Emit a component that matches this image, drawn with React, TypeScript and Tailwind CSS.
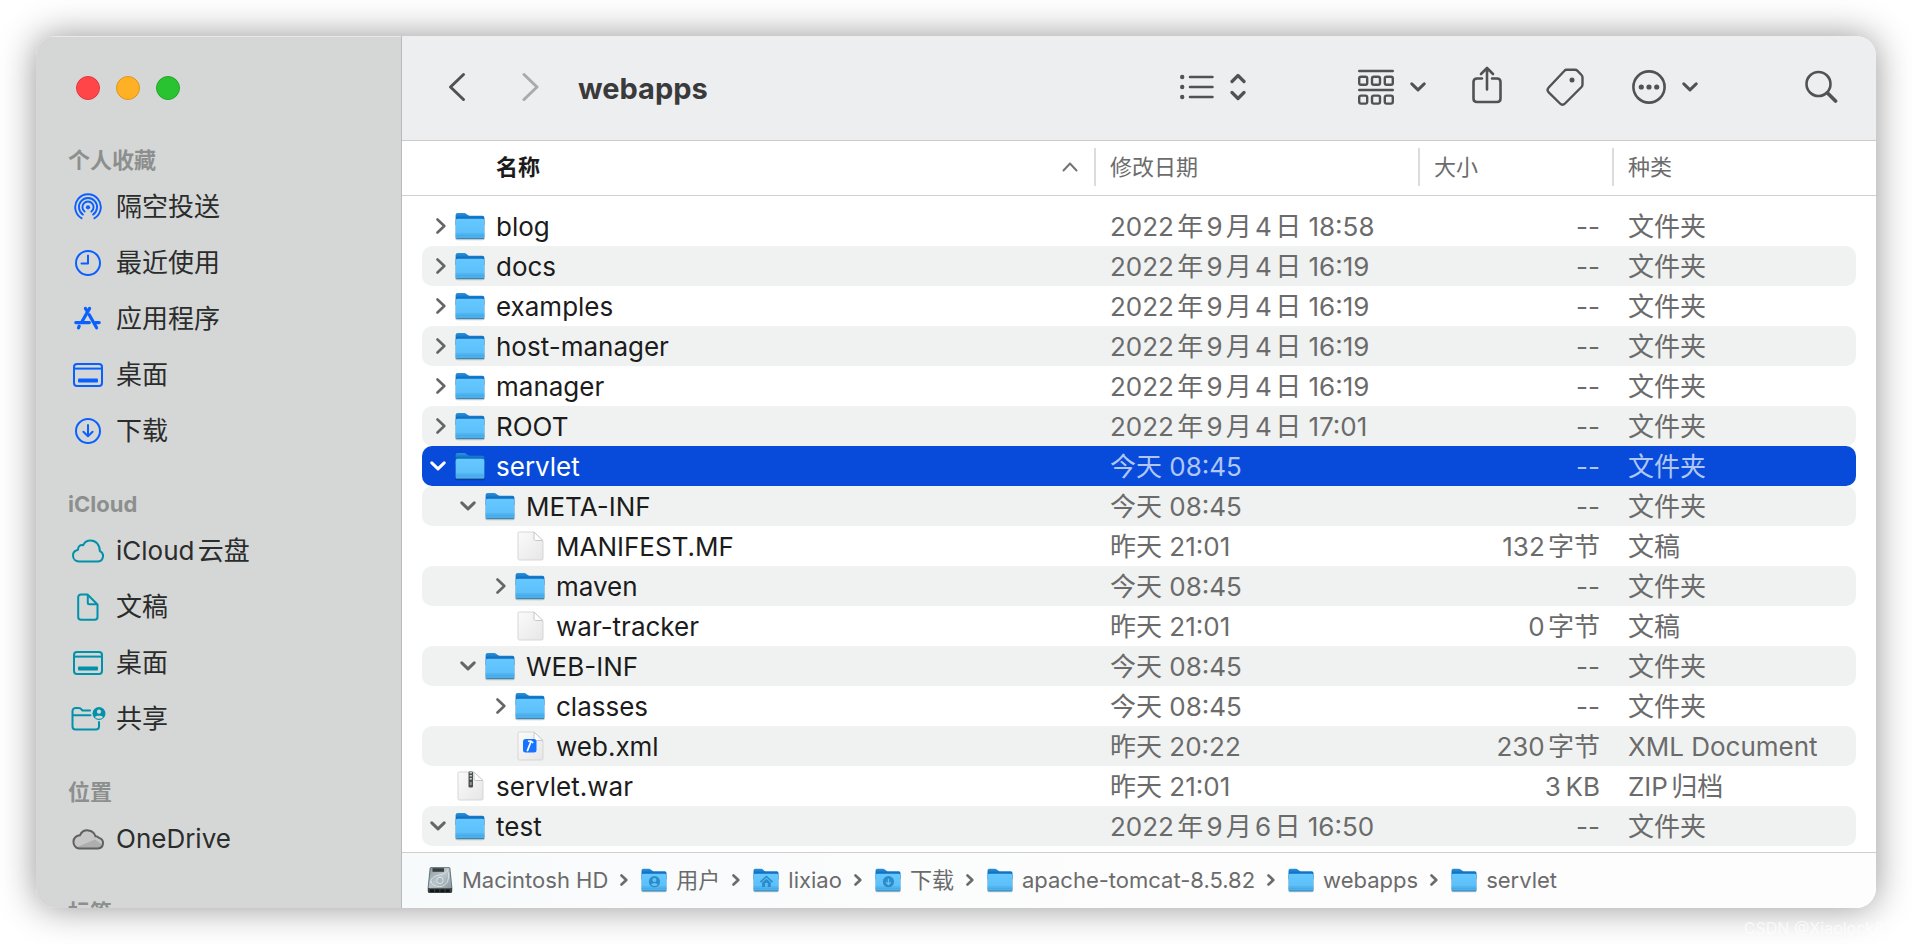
import type { ReactNode } from "react";

type IconProps = { className?: string };

type Entry = {
  name: string;
  depth: number;
  icon: "folder" | "doc" | "xml" | "zip";
  open?: boolean;
  date: string;
  size: string;
  kind: string;
  selected?: boolean;
};

const entries: Entry[] = [
  { name: "blog", depth: 0, icon: "folder", date: "2022年9月4日 18:58", size: "--", kind: "文件夹" },
  { name: "docs", depth: 0, icon: "folder", date: "2022年9月4日 16:19", size: "--", kind: "文件夹" },
  { name: "examples", depth: 0, icon: "folder", date: "2022年9月4日 16:19", size: "--", kind: "文件夹" },
  { name: "host-manager", depth: 0, icon: "folder", date: "2022年9月4日 16:19", size: "--", kind: "文件夹" },
  { name: "manager", depth: 0, icon: "folder", date: "2022年9月4日 16:19", size: "--", kind: "文件夹" },
  { name: "ROOT", depth: 0, icon: "folder", date: "2022年9月4日 17:01", size: "--", kind: "文件夹" },
  { name: "servlet", depth: 0, icon: "folder", open: true, selected: true, date: "今天 08:45", size: "--", kind: "文件夹" },
  { name: "META-INF", depth: 1, icon: "folder", open: true, date: "今天 08:45", size: "--", kind: "文件夹" },
  { name: "MANIFEST.MF", depth: 2, icon: "doc", date: "昨天 21:01", size: "132字节", kind: "文稿" },
  { name: "maven", depth: 2, icon: "folder", date: "今天 08:45", size: "--", kind: "文件夹" },
  { name: "war-tracker", depth: 2, icon: "doc", date: "昨天 21:01", size: "0字节", kind: "文稿" },
  { name: "WEB-INF", depth: 1, icon: "folder", open: true, date: "今天 08:45", size: "--", kind: "文件夹" },
  { name: "classes", depth: 2, icon: "folder", date: "今天 08:45", size: "--", kind: "文件夹" },
  { name: "web.xml", depth: 2, icon: "xml", date: "昨天 20:22", size: "230字节", kind: "XML Document" },
  { name: "servlet.war", depth: 0, icon: "zip", date: "昨天 21:01", size: "3\u2009KB", kind: "ZIP归档" },
  { name: "test", depth: 0, icon: "folder", open: true, date: "2022年9月6日 16:50", size: "--", kind: "文件夹" },
];

const indents = ["pl-2", "pl-[38px]", "pl-[68px]"];

/* ---------- sidebar icons ---------- */

function AirDropIcon() {
  return (
    <svg width="28" height="28" viewBox="0 0 28 28" fill="none" stroke="currentColor" strokeWidth="1.9" strokeLinecap="round">
      <path d="M7.6 25.2A12.8 12.8 0 1 1 20.4 25.2" />
      <path d="M8.9 21.6A9.1 9.1 0 1 1 19.1 21.6" />
      <path d="M10.6 18.6A5.6 5.6 0 1 1 17.4 18.6" />
      <circle cx="14" cy="14.3" r="2.1" fill="currentColor" stroke="none" />
    </svg>
  );
}

function ClockIcon() {
  return (
    <svg width="28" height="28" viewBox="0 0 28 28" fill="none" stroke="currentColor" strokeWidth="2" strokeLinecap="round" strokeLinejoin="round">
      <circle cx="14" cy="14" r="12" />
      <path d="M14 6.5V14.5H7.5" />
    </svg>
  );
}

function AppsIcon() {
  return (
    <svg width="28" height="28" viewBox="0 0 28 28" fill="none" stroke="currentColor" strokeWidth="3.2" strokeLinecap="round">
      <path d="M1.8 17.6H15.4M21.6 17.6H25.2" />
      <path d="M15.6 3.4L7.6 17.2" />
      <path d="M11.4 3.4L13.4 6.6" />
      <path d="M5.2 21.2L4.5 22.8" />
      <path d="M15.2 9.8L22.6 22.8" />
    </svg>
  );
}

function DesktopIcon() {
  return (
    <svg width="30" height="24" viewBox="0 0 30 24" fill="none" stroke="currentColor" strokeWidth="2">
      <rect x="1" y="1" width="28" height="22" rx="3" />
      <path d="M1 5.6H29" />
      <rect x="5" y="15.5" width="20" height="4" rx="1" fill="currentColor" stroke="none" />
    </svg>
  );
}

function DownloadIcon() {
  return (
    <svg width="28" height="28" viewBox="0 0 28 28" fill="none" stroke="currentColor" strokeWidth="2" strokeLinecap="round" strokeLinejoin="round">
      <circle cx="14" cy="14" r="12" />
      <path d="M14 8V19M9.4 14.8L14 19.3L18.6 14.8" />
    </svg>
  );
}

function CloudIcon() {
  return (
    <svg width="32" height="24" viewBox="0 0 32 24" fill="none" stroke="currentColor" strokeWidth="2" strokeLinejoin="round">
      <path d="M7 22.500H25.500A5.500 5.500 0 0 0 27.800 12C27.800 5.600 23.800 1.500 18.600 1.500C15 1.500 12.400 3.400 11.200 6.200C8.600 5.300 6 7.300 6 10.800C3 11.500 1 13.700 1 16.600C1 20 3.600 22.500 7 22.500Z" />
    </svg>
  );
}

function DocumentIcon() {
  return (
    <svg width="24" height="28" viewBox="0 0 24 28" fill="none" stroke="currentColor" strokeWidth="2" strokeLinejoin="round">
      <path d="M5 1.5H11.5L21.5 11.5V24A2.8 2.8 0 0 1 18.7 26.8H5A2.8 2.8 0 0 1 2.2 24V4.3A2.8 2.8 0 0 1 5 1.5Z" />
      <path d="M11.8 2V9.7A1.5 1.5 0 0 0 13.3 11.2H21" />
    </svg>
  );
}

function SharedIcon() {
  return (
    <svg width="36" height="26" viewBox="0 0 36 26" fill="none" stroke="currentColor" strokeWidth="2" strokeLinecap="round">
      <path d="M20 4.5H12.5L10.5 2.6C9.8 2 9.500 2 8.5 2H5.5A3 3 0 0 0 2.5 5V20.5A3 3 0 0 0 5.5 23.5H26A3 3 0 0 0 29 20.5V16" />
      <path d="M3 9.2H20.5" />
      <circle cx="29" cy="7.5" r="6.5" fill="currentColor" stroke="none" />
      <circle cx="29" cy="5.7" r="2.1" fill="#d5d7d6" stroke="none" />
      <path d="M25 11.2C26 9.3 32 9.3 33 11.2C31 13.3 27 13.3 25 11.2Z" fill="#d5d7d6" stroke="none" />
    </svg>
  );
}

function OneDriveIcon() {
  return (
    <svg width="34" height="22" viewBox="0 0 34 22">
      <path d="M8 20.5H27A5.4 5.4 0 0 0 28 9.9A5 5 0 0 0 24.5 8.3A8.3 8.3 0 0 0 9 7.2A6.7 6.7 0 0 0 8 20.5Z" fill="#c6c7c6" />
      <path d="M5 19.6L24 11.5L31.5 17Q30 20.5 27 20.5H8Z" fill="#adafad" />
      <path d="M8 20.5H27A5.4 5.4 0 0 0 28 9.9A5 5 0 0 0 24.5 8.3A8.3 8.3 0 0 0 9 7.2A6.7 6.7 0 0 0 8 20.5Z" fill="none" stroke="#5e5f5e" strokeWidth="2" />
    </svg>
  );
}

/* ---------- file icons ---------- */

function FolderIcon({ className = "h-[30px] w-8", badge }: IconProps & { badge?: ReactNode }) {
  return (
    <svg className={className} viewBox="0 0 32 30">
      <defs>
        <linearGradient id="folder-front" x1="0" y1="0" x2="0" y2="1">
          <stop offset="0" stopColor="#66c8ff" />
          <stop offset="0.75" stopColor="#5cbffa" />
          <stop offset="1" stopColor="#46a9e6" />
        </linearGradient>
        <linearGradient id="folder-back" x1="0" y1="0" x2="0" y2="1">
          <stop offset="0" stopColor="#2b95da" />
          <stop offset="0.4" stopColor="#0f6fc4" />
        </linearGradient>
      </defs>
      <rect x="1.2" y="8" width="29.6" height="21.2" rx="2" fill="#000" opacity="0.22" />
      <path d="M1.6 4Q1.6 2 3.6 2H10.5C12.5 2 13.5 4.8 15.5 4.8H28.500Q30.400 4.8 30.4 6.8V14H1.6Z" fill="url(#folder-back)" />
      <path d="M1.6 10Q1.6 7.8 3.6 7.8H28.4Q30.4 7.8 30.4 10V26.3Q30.4 28 28.8 28H3.300Q1.6 28 1.6 26.3Z" fill="url(#folder-front)" />
      <path d="M1.600 23H30.400M1.600 24.7H30.400" stroke="#2f93d0" strokeWidth="0.6" opacity="0.7" />
      <path d="M2.5 27.5H30" stroke="#2c7fb4" strokeWidth="0.8" />
      {badge}
    </svg>
  );
}

function FileIcon({ children }: { children?: ReactNode }) {
  return (
    <svg className="h-[30px] w-8" viewBox="0 0 32 30">
      <defs>
        <linearGradient id="sheet" x1="0" y1="0" x2="1" y2="1">
          <stop offset="0" stopColor="#fbfbfb" />
          <stop offset="1" stopColor="#e6e6e6" />
        </linearGradient>
      </defs>
      <path d="M4 2Q4 1 5.5 1H20L29 10V27.5Q29 29 27.5 29H5.5Q4 29 4 27.5Z" fill="url(#sheet)" stroke="#d2d2d2" strokeWidth="0.9" />
      <path d="M20 1V8Q20 9.5 21.5 9.5H29Z" fill="#fdfdfd" stroke="#c2c2c2" strokeWidth="0.9" />
      {children}
    </svg>
  );
}

function XmlFileIcon() {
  return (
    <FileIcon>
      <rect x="9" y="8" width="13.5" height="13.5" rx="2.5" fill="#1673ff" />
      <path d="M17 10.5L13.5 19.5" stroke="#fff" strokeWidth="1.8" strokeLinecap="round" />
      <path d="M14 10.3Q17 9.3 19.2 12" stroke="#fff" strokeWidth="1.4" fill="none" />
    </FileIcon>
  );
}

function ZipFileIcon() {
  return (
    <FileIcon>
      <rect x="14.5" y="0.5" width="4.5" height="16" rx="1" fill="#4c4f50" />
      <path d="M16.8 1V10" stroke="#c9cfd0" strokeWidth="2.2" strokeDasharray="1.5 1.5" />
      <path d="M16.8 11V14" stroke="#8f9899" strokeWidth="1.8" />
    </FileIcon>
  );
}

function DiskIcon() {
  return (
    <svg className="size-7" viewBox="0 0 28 28">
      <defs>
        <linearGradient id="disk" x1="0" y1="0" x2="1" y2="1">
          <stop offset="0" stopColor="#8b999f" />
          <stop offset="0.5" stopColor="#b9c6cb" />
          <stop offset="1" stopColor="#8a979c" />
        </linearGradient>
      </defs>
      <path d="M3.600 2.5Q3.800 1 5.300 1H22.700Q24.200 1 24.400 2.5L26.3 21V25Q26.3 27 24.5 27H3.5Q1.7 27 1.7 25V21Z" fill="#66727a" />
      <path d="M2 22H26V25.300Q26 27 24.500 27H3.500Q2 27 2 25.300Z" fill="#3b3f41" />
      <path d="M4.600 3Q4.700 1.700 5.600 1.700H22.400Q23.300 1.700 23.400 3L25.400 21Q25.400 22.3 24.2 22.3H3.800Q2.600 22.3 2.600 21Z" fill="url(#disk)" />
      <rect x="6.5" y="2.2" width="11.5" height="3.6" fill="#393e41" />
      <path d="M4.5 17C5 10 12 9.5 15 8.5C19 7.5 21.5 6 21.7 3.5M22.5 6.5C23.5 15 20 20.5 13.5 20.5C9 20.5 5.5 19 5 15" stroke="#dce6ea" strokeWidth="0.9" fill="none" />
      <circle cx="14" cy="14.5" r="3.2" fill="#a9b6bb" stroke="#e0e9ec" strokeWidth="0.9" />
      <path d="M4 24.7H24" stroke="#121415" strokeWidth="2.4" strokeDasharray="4 1.2" />
    </svg>
  );
}

const fileIcons = {
  folder: <FolderIcon />,
  doc: <FileIcon />,
  xml: <XmlFileIcon />,
  zip: <ZipFileIcon />,
};

/* ---------- chevrons ---------- */

function ChevronDown({ className = "" }: IconProps) {
  return (
    <svg className={className} width="16" height="10" viewBox="0 0 16 10" fill="none" stroke="currentColor" strokeWidth="3" strokeLinecap="round" strokeLinejoin="round">
      <path d="M1.8 1.8L8 7.8L14.2 1.8" />
    </svg>
  );
}

function ChevronRight() {
  return (
    <svg width="10" height="16" viewBox="0 0 10 16" fill="none" stroke="currentColor" strokeWidth="2.6" strokeLinecap="round" strokeLinejoin="round">
      <path d="M1.5 1.5L8.3 8L1.5 14.5" />
    </svg>
  );
}

/* ---------- sidebar ---------- */

const sections = [
  {
    title: "个人收藏",
    color: "text-[#0a60ff]",
    items: [
      { label: "隔空投送", icon: <AirDropIcon /> },
      { label: "最近使用", icon: <ClockIcon /> },
      { label: "应用程序", icon: <AppsIcon /> },
      { label: "桌面", icon: <DesktopIcon /> },
      { label: "下载", icon: <DownloadIcon /> },
    ],
  },
  {
    title: "iCloud",
    color: "text-[#0092ab]",
    items: [
      { label: "iCloud云盘", icon: <CloudIcon /> },
      { label: "文稿", icon: <DocumentIcon /> },
      { label: "桌面", icon: <DesktopIcon /> },
      { label: "共享", icon: <SharedIcon /> },
    ],
  },
  {
    title: "位置",
    color: "text-[#5e5f5e]",
    items: [{ label: "OneDrive", icon: <OneDriveIcon /> }],
  },
  { title: "标签", color: "", items: [] },
];

function Sidebar() {
  return (
    <aside className="flex w-[366px] shrink-0 flex-col overflow-hidden border-r border-[#b9bbba] bg-[#d5d7d6]">
      <div className="flex h-[105px] shrink-0 items-center gap-4 border-t border-[#e8e9e9] pb-[2px] pl-10">
        <button aria-label="关闭" className="size-6 rounded-full border border-[#e0383c] bg-[#ff4548]" />
        <button aria-label="最小化" className="size-6 rounded-full border border-[#dc951f] bg-[#ffb024]" />
        <button aria-label="缩放" className="size-6 rounded-full border border-[#1fa82a] bg-[#29c231]" />
      </div>
      <nav className="flex flex-col gap-[26px] px-8">
        {sections.map((section) => (
          <section key={section.title}>
            <h2 className="flex h-[38px] items-center text-[22px] font-bold text-[#8d8f8e]">{section.title}</h2>
            {section.items.map((item) => (
              <a key={item.label} href="#" className="flex h-14 items-center gap-2 text-[#2b2c2c]">
                <span className={`flex w-10 justify-center ${section.color}`}>{item.icon}</span>
                {item.label}
              </a>
            ))}
          </section>
        ))}
      </nav>
    </aside>
  );
}

/* ---------- toolbar ---------- */

function Toolbar() {
  return (
    <header className="flex h-[105px] shrink-0 items-center border-b border-[#cbcbcc] bg-[#edeef0] pr-[38px] pb-[2px] pl-[46px] text-[#515254]">
      <button aria-label="后退">
        <svg width="18" height="30" viewBox="0 0 18 30" fill="none" stroke="currentColor" strokeWidth="3" strokeLinecap="round" strokeLinejoin="round">
          <path d="M15.5 2.5L2.5 15L15.5 27.5" />
        </svg>
      </button>
      <button aria-label="前进" className="ml-14 text-[#a9aaac]">
        <svg width="18" height="30" viewBox="0 0 18 30" fill="none" stroke="currentColor" strokeWidth="3" strokeLinecap="round" strokeLinejoin="round">
          <path d="M2 2.5L15 15L2 27.5" />
        </svg>
      </button>
      <h1 className="ml-[38px] pt-[2px] text-[29px] font-bold text-[#3a3a3b]">webapps</h1>

      <button aria-label="列表显示" className="ml-auto flex items-center gap-4">
        <svg width="34" height="26" viewBox="0 0 34 26" stroke="currentColor" strokeWidth="2.5" strokeLinecap="round">
          <path d="M10 3H32.5M10 13H32.5M10 23H32.5" />
          <path d="M2.2 3H2.21M2.2 13H2.21M2.2 23H2.21" strokeWidth="4.4" />
        </svg>
        <svg width="16" height="28" viewBox="0 0 16 28" fill="none" stroke="currentColor" strokeWidth="3.2" strokeLinecap="round" strokeLinejoin="round">
          <path d="M2 8.5L8 2.5L14 8.5M2 19.5L8 25.5L14 19.5" />
        </svg>
      </button>
      <button aria-label="分组" className="ml-28 flex items-center gap-4">
        <svg width="36" height="36" viewBox="0 0 36 36" fill="none" stroke="currentColor" strokeWidth="2.4" strokeLinecap="round">
          <path d="M1.2 2H34.8M1.2 21H34.8" />
          <rect x="1.2" y="7.7" width="8" height="8" rx="1.8" />
          <rect x="14" y="7.7" width="8" height="8" rx="1.8" />
          <rect x="26.8" y="7.7" width="8" height="8" rx="1.8" />
          <rect x="1.2" y="26.6" width="8" height="8" rx="1.8" />
          <rect x="14" y="26.6" width="8" height="8" rx="1.8" />
          <rect x="26.8" y="26.6" width="8" height="8" rx="1.8" />
        </svg>
        <ChevronDown />
      </button>
      <button aria-label="共享" className="ml-[46px] pb-1">
        <svg width="30" height="38" viewBox="0 0 30 38" fill="none" stroke="currentColor" strokeWidth="2.6" strokeLinecap="round" strokeLinejoin="round">
          <path d="M10 12.5H5Q1.5 12.5 1.5 16V32.5Q1.5 36 5 36H25Q28.5 36 28.5 32.5V16Q28.5 12.5 25 12.5H20" />
          <path d="M15 23.5V2M9 8L15 2L21 8" />
        </svg>
      </button>
      <button aria-label="标签" className="ml-11">
        <svg width="38" height="38" viewBox="0 0 38 38" fill="none" stroke="currentColor" strokeWidth="2.4" strokeLinejoin="round">
          <path d="M20.5 1.8H29Q30.5 1.8 31.5 2.8L35.5 7Q36.5 8 36.5 9.5V16.5Q36.5 18 35.5 19L19 35.5Q16.5 38 14 35.5L2.7 24.3Q0.4 22 2.7 19.5L18.5 2.8Q19.3 1.8 20.5 1.8Z" />
          <circle cx="26" cy="12" r="2.5" fill="currentColor" stroke="none" />
        </svg>
      </button>
      <button aria-label="更多" className="ml-12 flex items-center gap-4">
        <svg width="34" height="34" viewBox="0 0 34 34">
          <circle cx="17" cy="17" r="15.6" fill="none" stroke="currentColor" strokeWidth="2.6" />
          <circle cx="9.3" cy="17" r="2.6" fill="currentColor" />
          <circle cx="17" cy="17" r="2.6" fill="currentColor" />
          <circle cx="24.7" cy="17" r="2.6" fill="currentColor" />
        </svg>
        <ChevronDown />
      </button>
      <button aria-label="搜索" className="ml-[106px]">
        <svg width="34" height="34" viewBox="0 0 34 34" fill="none" stroke="currentColor" strokeLinecap="round">
          <circle cx="14.500" cy="14" r="12" strokeWidth="2.6" />
          <path d="M23.500 23L31.500 31" strokeWidth="3.8" />
        </svg>
      </button>
    </header>
  );
}

/* ---------- file list ---------- */

const columns = ["修改日期", "大小", "种类"];

function FileList() {
  return (
    <div className="min-h-0 flex-1 overflow-hidden bg-white">
      <table className="w-full table-fixed border-separate border-spacing-0 text-left">
        <colgroup>
          <col />
          <col className="w-[324px]" />
          <col className="w-[194px]" />
          <col className="w-[264px]" />
        </colgroup>
        <thead>
          <tr className="h-[55px] text-[22px]">
            <th className="border-b border-[#d0d0d0] p-0 pb-[3px] font-bold text-[#1c1c1c]">
              <button className="flex w-full items-center justify-between pr-4 pl-[94px]">
                名称
                <svg width="16" height="10" viewBox="0 0 16 10" fill="none" stroke="#747474" strokeWidth="2" strokeLinecap="round" strokeLinejoin="round">
                  <path d="M1.5 8.5L8 1.5L14.5 8.5" />
                </svg>
              </button>
            </th>
            {columns.map((column) => (
              <th key={column} className="border-b border-[#d0d0d0] p-0 pb-[3px] font-normal text-[#6c6c6c]">
                <button className="flex h-[38px] w-full items-center border-l-2 border-[#dcdcdc] pl-[14px]">{column}</button>
              </th>
            ))}
          </tr>
        </thead>
        <tbody className="before:block before:h-[10px] before:content-['']">
          {entries.map((entry, i) => {
            const bg = entry.selected ? "bg-[#084bdb]" : i % 2 ? "bg-[#f0f2f1]" : "";
            const muted = entry.selected ? "text-[#b0c6f5]" : "text-[#6b6b6b]";
            return (
              <tr key={i} className={muted}>
                <td className="p-0 pl-5">
                  <div className={`flex h-10 items-center rounded-l-[10px] ${bg} ${indents[entry.depth]}`}>
                    <span className={`mr-2 flex w-4 shrink-0 justify-end ${entry.selected ? "text-white" : "text-[#666]"}`}>
                      {entry.icon === "folder" && (
                        <button aria-label={entry.open ? "收起" : "展开"}>
                          {entry.open ? <ChevronDown /> : <ChevronRight />}
                        </button>
                      )}
                    </span>
                    {fileIcons[entry.icon]}
                    <span className={`pt-[2px] pl-[10px] ${entry.selected ? "text-white" : "text-[#1c1c1c]"}`}>{entry.name}</span>
                  </div>
                </td>
                <td className="p-0">
                  <div className={`flex h-10 items-center pt-[2px] pl-4 ${bg}`}>{entry.date}</div>
                </td>
                <td className="p-0">
                  <div className={`flex h-10 items-center justify-end pt-[2px] pr-3 ${bg}`}>{entry.size}</div>
                </td>
                <td className="p-0 pr-5">
                  <div className={`flex h-10 items-center rounded-r-[10px] pt-[2px] pl-4 ${bg}`}>{entry.kind}</div>
                </td>
              </tr>
            );
          })}
        </tbody>
      </table>
    </div>
  );
}

/* ---------- path bar ---------- */

const personBadge = (
  <g>
    <circle cx="16.5" cy="17" r="6.5" fill="#2b8cc9" />
    <circle cx="16.5" cy="15" r="2.3" fill="#66c2f5" />
    <path d="M12.5 20.5Q16.5 16.5 20.5 20.5Q16.5 23.5 12.5 20.5Z" fill="#66c2f5" />
  </g>
);

const homeBadge = (
  <g>
    <path d="M9.5 17.5L16.5 11L23.5 17.5" stroke="#2b8cc9" strokeWidth="1.8" fill="none" />
    <path d="M11.5 18L16.5 13.5L21.5 18V23H18V18.5H15V23H11.5Z" fill="#2b8cc9" />
  </g>
);

const downloadBadge = (
  <g>
    <circle cx="16.5" cy="17" r="6.5" fill="#2b8cc9" />
    <path d="M16.5 13.5V20M13.8 17.6L16.5 20.3L19.2 17.6" stroke="#66c2f5" strokeWidth="1.5" fill="none" />
  </g>
);

const crumbs = [
  { label: "Macintosh HD", icon: <DiskIcon /> },
  { label: "用户", icon: <FolderIcon className="h-[26px] w-7" badge={personBadge} /> },
  { label: "lixiao", icon: <FolderIcon className="h-[26px] w-7" badge={homeBadge} /> },
  { label: "下载", icon: <FolderIcon className="h-[26px] w-7" badge={downloadBadge} /> },
  { label: "apache-tomcat-8.5.82", icon: <FolderIcon className="h-[26px] w-7" /> },
  { label: "webapps", icon: <FolderIcon className="h-[26px] w-7" /> },
  { label: "servlet", icon: <FolderIcon className="h-[26px] w-7" /> },
];

function PathBar() {
  return (
    <footer className="flex h-14 shrink-0 items-center border-t border-[#cfcfcf] bg-linear-to-r from-[#f7fafb] via-[#fdfdfd] to-[#fdfdfd] pb-[2px] pl-6 text-[22px] text-[#6b6b6b]">
      {crumbs.map((crumb, i) => (
        <div key={crumb.label} className="flex items-center">
          {i > 0 && (
            <svg className="mx-3" width="8" height="12" viewBox="0 0 8 12" fill="none" stroke="currentColor" strokeWidth="2.6" strokeLinecap="round" strokeLinejoin="round">
              <path d="M1.5 1.5L6.3 6L1.5 10.5" />
            </svg>
          )}
          <a href="#" className="flex items-center gap-2">
            {crumb.icon}
            {crumb.label}
          </a>
        </div>
      ))}
    </footer>
  );
}

export default function App() {
  return (
    <div className="relative flex h-screen overflow-hidden bg-white p-9 font-['Inter','Noto_Sans_CJK_SC',sans-serif] text-[26px] leading-none whitespace-nowrap [text-autospace:normal]">
      <div className="flex min-w-0 flex-1 overflow-hidden rounded-[20px] shadow-[0_0_36px_rgba(0,0,0,0.42)]">
        <Sidebar />
        <main className="flex min-w-0 flex-1 flex-col">
          <Toolbar />
          <FileList />
          <PathBar />
        </main>
      </div>
      <span className="absolute right-2 bottom-2 text-[16px] text-white/70">CSDN @Xiaolock830</span>
    </div>
  );
}
